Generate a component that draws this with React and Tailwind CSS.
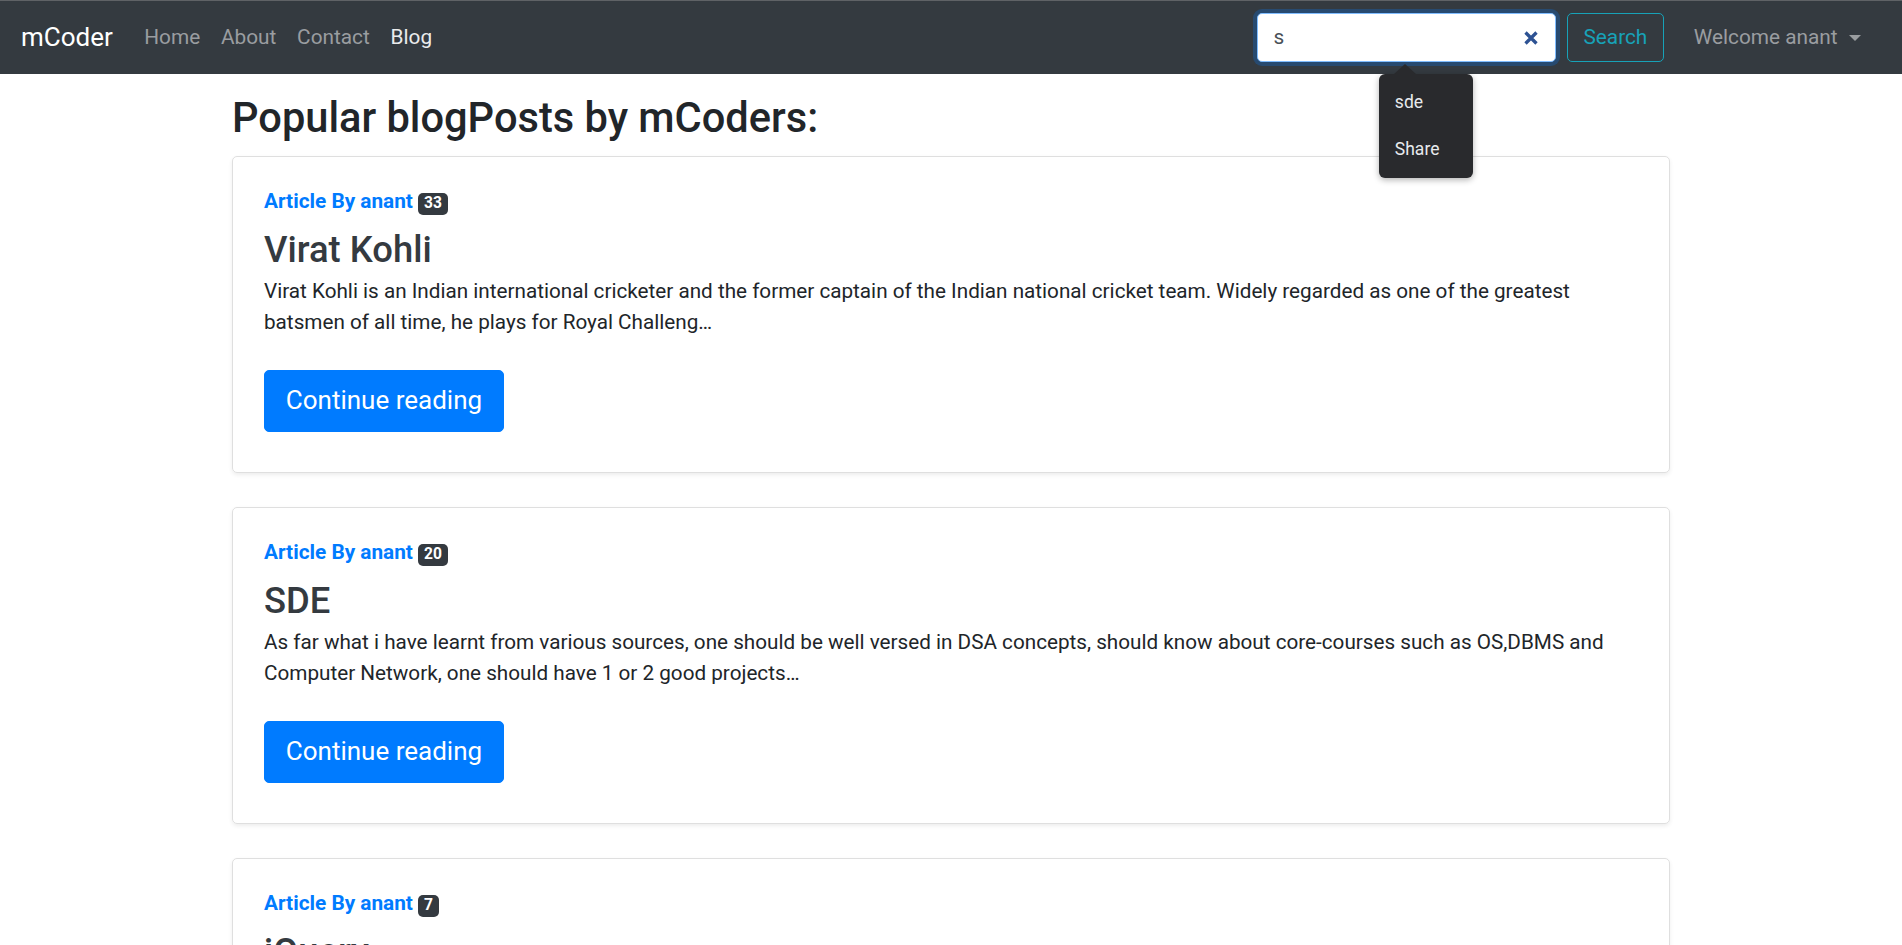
const posts = [
  {
    id: 1,
    votes: 33,
    title: "Virat Kohli",
    text: "Virat Kohli is an Indian international cricketer and the former captain of the Indian national cricket team. Widely regarded as one of the greatest batsmen of all time, he plays for Royal Challeng…",
  },
  {
    id: 2,
    votes: 20,
    title: "SDE",
    text: "As far what i have learnt from various sources, one should be well versed in DSA concepts, should know about core-courses such as OS,DBMS and Computer Network, one should have 1 or 2 good projects…",
  },
  {
    id: 3,
    votes: 7,
    title: "jQuery",
    text: "jQuery is a JavaScript library designed to simplify HTML DOM tree traversal and manipulation, as well as event handling, CSS animation, and Ajax. It is free, open-source software using the permissive MIT…",
  },
];

const links = ["Home", "About", "Contact", "Blog"];

const Navbar = () => {
  return (
    <nav className="flex h-[74px] items-center border-t border-[#5f6266] bg-[#343a40] px-[21px]">
      <a href="#" className="mr-[21px] text-[26px] leading-[39px] text-white">
        mCoder
      </a>
      <ul className="flex text-[20.8px] leading-[31px]">
        {links.map((l) => (
          <li key={l}>
            <a
              href="#"
              className={
                l === "Blog"
                  ? "px-[10.4px] text-[#eaebec]"
                  : "px-[10.4px] text-[#9a9da0]"
              }
            >
              {l}
            </a>
          </li>
        ))}
      </ul>

      <div className="ml-auto flex items-center">
        <div className="relative flex h-[49px] w-[299px] items-center rounded-[5px] border border-[#80bdff] bg-white px-[15.6px] shadow-[0_0_0_4px_#274a70]">
          <span className="flex-1 text-[20.8px] text-[#495057]">s</span>
          <svg width="14" height="14" viewBox="0 0 14 14" className="mr-[1px]">
            <path
              d="M1.5 1.5 L12.5 12.5 M12.5 1.5 L1.5 12.5"
              stroke="#2d5293"
              strokeWidth="3.3"
            />
          </svg>

          {/* suggestions popup */}
          <div className="absolute left-[121px] top-[60px] z-10 w-[94px] rounded-[6px] bg-[#292a2d] py-[5px] text-[17.5px] text-[#e8eaed] shadow-[0_2px_6px_rgba(0,0,0,0.3)]">
            <div className="absolute -top-[10px] left-[15px] h-0 w-0 border-x-[11px] border-b-[10px] border-x-transparent border-b-[#292a2d]" />
            <div className="flex h-[47px] items-center px-[16px]">sde</div>
            <div className="flex h-[47px] items-center px-[16px]">Share</div>
          </div>
        </div>
        <button className="ml-[11px] h-[49px] rounded-[5px] border border-[#17a2b8] px-[15.6px] text-[20.8px] text-[#17a2b8]">
          Search
        </button>
        <a
          href="#"
          className="ml-[19.5px] mr-[10px] flex items-center px-[10.4px] text-[20.8px] leading-[31px] text-[#9a9da0]"
        >
          Welcome anant
          <span className="ml-[11px] h-0 w-0 border-x-[6px] border-t-[6px] border-x-transparent border-t-[#9a9da0]" />
        </a>
      </div>
    </nav>
  );
};

const PostCard = ({ post }) => {
  return (
    <div className="mb-[34px] flex h-[317px] flex-col rounded-[5px] border border-[#dfdfdf] px-[31px] pt-[29px] shadow-[0_2px_4px_rgba(0,0,0,0.075)]">
      <div className="text-[20.8px] font-bold leading-[31px] text-[#007bff]">
        Article By anant{" "}
        <span className="inline-block rounded-[5px] bg-[#343a40] px-[6px] py-[3px] align-baseline text-[15.6px] leading-none text-white">
          {post.votes}
        </span>
      </div>
      <h3 className="mt-[11px] text-[36.4px] font-medium leading-[44px] text-[#343a40]">
        {post.title}
      </h3>
      <p className="mt-[4px] text-[20.7px] leading-[31px] text-[#212529]">
        {post.text}
      </p>
      <a
        href="#"
        className="mt-[32px] self-start rounded-[5px] border border-[#007bff] bg-[#007bff] px-[20.8px] py-[10.5px] text-[26px] leading-[39px] text-white"
      >
        Continue reading
      </a>
    </div>
  );
};

export default function App() {
  return (
    <div className="h-screen overflow-hidden bg-white font-['Roboto',sans-serif] text-[#212529]">
      <Navbar />
      <div className="mx-auto w-[1438px]">
        <h2 className="mb-[13px] mt-[19px] text-[41.6px] font-medium leading-[1.2]">
          Popular blogPosts by mCoders:
        </h2>
        {posts.map((p) => (
          <PostCard key={p.id} post={p} />
        ))}
      </div>
    </div>
  );
}
